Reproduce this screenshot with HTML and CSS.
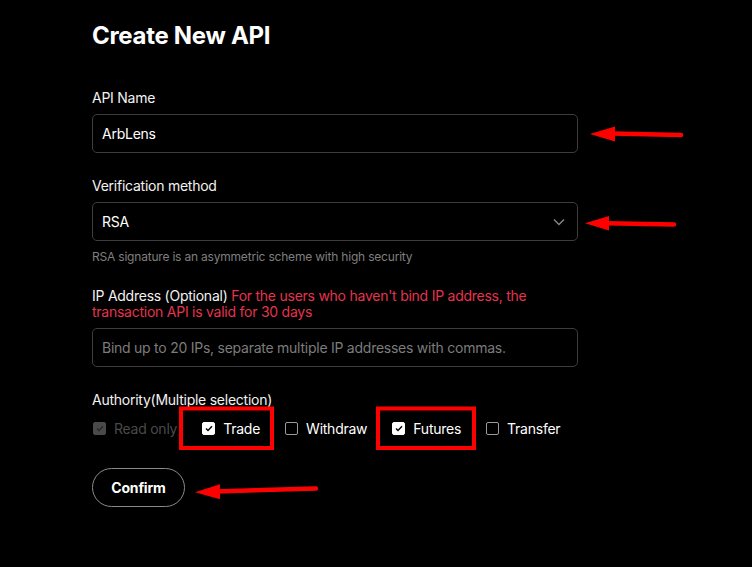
FILE: index.html
```html
<!DOCTYPE html>
<html lang="en">
<head>
<meta charset="utf-8">
<title>Create New API</title>
<link rel="stylesheet" href="styles.css">
</head>
<body>
<div class="page">
  <main class="form">
    <h1 class="title">Create New API</h1>

    <div class="field">
      <div class="label">API Name</div>
      <div class="box"><span class="value">ArbLens</span></div>
    </div>

    <div class="field">
      <div class="label">Verification method</div>
      <div class="box select">
        <span class="value">RSA</span>
        <svg class="chevron" width="12" height="8" viewBox="0 0 12 8"><polyline points="1,1.5 6,6.5 11,1.5" fill="none" stroke="#8a8a8a" stroke-width="1.3"/></svg>
      </div>
      <div class="hint">RSA signature is an asymmetric scheme with high security</div>
    </div>

    <div class="field">
      <p class="label two">IP Address (Optional) <span class="warn">For the users who haven't bind IP address, the transaction API is valid for 30 days</span></p>
      <div class="box"><span class="placeholder">Bind up to 20 IPs, separate multiple IP addresses with commas.</span></div>
    </div>

    <div class="field">
      <div class="label">Authority(Multiple selection)</div>
      <div class="checks">
        <label class="check disabled"><span class="cb on"><svg width="8" height="7" viewBox="0 0 8 7"><polyline points="1,3.5 3,5.5 7,1.2" fill="none" stroke="#2a2a2a" stroke-width="1.4"/></svg></span>Read only</label>
        <label class="check"><span class="cb on"><svg width="8" height="7" viewBox="0 0 8 7"><polyline points="1,3.5 3,5.5 7,1.2" fill="none" stroke="#000" stroke-width="1.4"/></svg></span>Trade</label>
        <label class="check"><span class="cb"></span>Withdraw</label>
        <label class="check"><span class="cb on"><svg width="8" height="7" viewBox="0 0 8 7"><polyline points="1,3.5 3,5.5 7,1.2" fill="none" stroke="#000" stroke-width="1.4"/></svg></span>Futures</label>
        <label class="check"><span class="cb"></span>Transfer</label>
      </div>
    </div>

    <button class="confirm">Confirm</button>
  </main>

  <svg class="annotations" width="752" height="567" viewBox="0 0 752 567">
    <rect x="181" y="408.5" width="91" height="39.5" fill="none" stroke="#ff0000" stroke-width="4"/>
    <rect x="378" y="408.5" width="96" height="39.5" fill="none" stroke="#ff0000" stroke-width="4"/>
    <line x1="612" y1="133.5" x2="681" y2="135" stroke="#ff0000" stroke-width="4.5" stroke-linecap="round"/>
    <polygon points="590,134 615,126.5 615,141.5" fill="#ff0000"/>
    <line x1="606" y1="223.3" x2="674" y2="224.5" stroke="#ff0000" stroke-width="4.5" stroke-linecap="round"/>
    <polygon points="585,223.3 609,216 609,230.5" fill="#ff0000"/>
    <line x1="216" y1="491.5" x2="316" y2="488.5" stroke="#ff0000" stroke-width="4.5" stroke-linecap="round"/>
    <polygon points="195,492.3 220,484.3 220,499.3" fill="#ff0000"/>
  </svg>
</div>
</body>
</html>
```
FILE: styles.css
```css
* { box-sizing: border-box; }
html, body { margin: 0; padding: 0; background: #000; }
body {
  font-family: Inter, "Noto Sans", sans-serif;
  color: #fff;
  width: 752px;
  height: 567px;
  overflow: hidden;
}
.page {
  position: relative;
  width: 752px;
  height: 567px;
}
.form {
  padding: 19px 0 0 92px;
  width: 578px;
}
.title {
  margin: 0 0 36px;
  font-size: 24px;
  line-height: 33px;
  font-weight: 700;
  letter-spacing: -0.3px;
}
.field { margin-bottom: 23px; }
.label {
  font-size: 14px;
  line-height: 20px;
  margin: 0 0 6px;
  color: #f2f2f2;
  letter-spacing: -0.25px;
}
.label.two {
  line-height: 16px;
  margin-bottom: 8px;
}
.warn { color: #e6334f; }
.box {
  height: 39px;
  border: 1px solid #3d3d3d;
  border-radius: 5px;
  display: flex;
  align-items: center;
  padding: 0 9px;
  font-size: 14px;
  letter-spacing: -0.25px;
}
.value { color: #fff; }
.placeholder { color: #7c7c7c; }
.select { justify-content: space-between; padding-right: 12px; }
.chevron { display: block; }
.hint {
  margin-top: 8px;
  font-size: 12px;
  line-height: 16px;
  color: #7f7f7f;
  letter-spacing: -0.2px;
}
.checks {
  display: flex;
  align-items: center;
  gap: 25px;
  margin-top: 8px;
  padding-left: 1px;
  height: 20px;
  font-size: 14px;
  letter-spacing: -0.25px;
}
.check {
  display: flex;
  align-items: center;
  gap: 8px;
  color: #fff;
}
.cb {
  width: 13px;
  height: 13px;
  border: 1px solid #9a9a9a;
  border-radius: 2px;
  display: flex;
  align-items: center;
  justify-content: center;
}
.cb.on { background: #fff; border-color: #fff; }
.check.disabled { color: #4a4a4a; }
.check.disabled .cb { background: #4a4a4a; border-color: #4a4a4a; }
.confirm {
  margin-top: 7px;
  height: 39px;
  width: 93px;
  border: 1px solid #8a8a8a;
  border-radius: 20px;
  background: #000;
  color: #fff;
  font-family: inherit;
  font-size: 14px;
  font-weight: 700;
  letter-spacing: -0.2px;
  padding: 0;
}
.annotations {
  position: absolute;
  left: 0;
  top: 0;
  pointer-events: none;
}
```
